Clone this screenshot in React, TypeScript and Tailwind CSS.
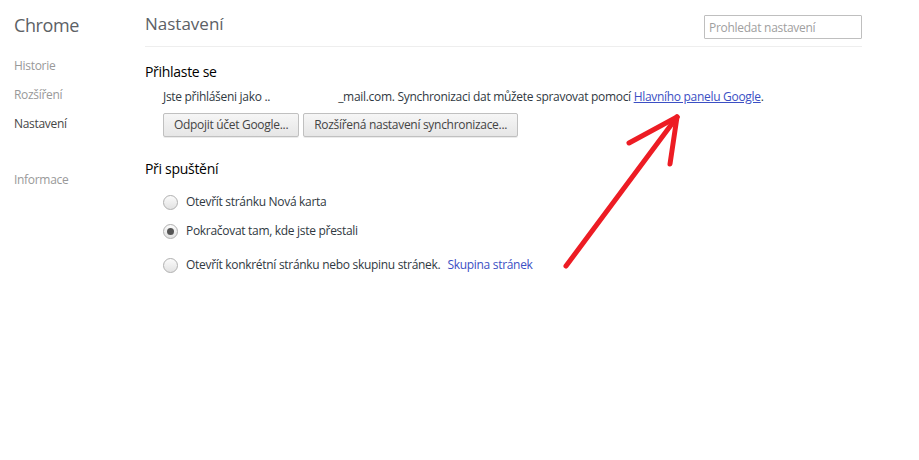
export default function App() {
  const font = { fontFamily: '"Open Sans", "Noto Sans", sans-serif' };
  return (
    <div className="relative h-[460px] w-[919px] bg-white text-[12px] tracking-[-0.3px] text-[#303942]" style={font}>
      <div className="flex">
        <aside className="w-[145px] shrink-0 pl-[14px] pt-[12px]">
          <div className="text-[18px] leading-[26px] tracking-[-0.4px] text-[#5c6166]">Chrome</div>
          <ul className="mt-[20px] space-y-[13px] leading-[16px]">
            <li className="text-[#999]">Historie</li>
            <li className="text-[#999]">Rozšíření</li>
            <li className="text-[#464646]">Nastavení</li>
          </ul>
          <div className="mt-[40px] leading-[16px] text-[#999]">Informace</div>
        </aside>

        <main className="w-[717px]">
          <header className="flex h-[47px] items-start justify-between border-b border-[#eeeeee] pt-[12px]">
            <h1 className="text-[17px] leading-[24px] tracking-normal text-[#5c6166]">Nastavení</h1>
            <input
              className="mt-[3px] h-[24px] w-[158px] rounded-[1px] border border-[#bfbfbf] px-[4px] text-[12px] tracking-[-0.28px] outline-none placeholder:text-[#a0a0a0]"
              placeholder="Prohledat nastavení"
              style={font}
            />
          </header>

          <section className="pt-[15px]">
            <h3 className="text-[14px] leading-[20px] text-[#000]">Přihlaste se</h3>
            <div className="mt-[7px] pl-[18px]">
              <p className="leading-[16px]">
                Jste přihlášeni jako ..
                <span className="inline-block w-[68px]" />
                _mail.com. Synchronizaci dat můžete spravovat pomocí{" "}
                <span className="text-[#3b4fc4] underline">Hlavního panelu Google</span>.
              </p>
              <div className="mt-[8px] flex gap-[4px]">
                <button className="h-[24px] rounded-[2px] border border-[#c0c0c0] bg-gradient-to-b from-[#f6f6f6] to-[#e6e6e6] px-[10px] text-[12px] text-[#444] shadow-[0_1px_0_rgba(0,0,0,0.08)]">
                  Odpojit účet Google...
                </button>
                <button className="h-[24px] rounded-[2px] border border-[#c0c0c0] bg-gradient-to-b from-[#f6f6f6] to-[#e6e6e6] px-[10px] text-[12px] text-[#444] shadow-[0_1px_0_rgba(0,0,0,0.08)]">
                  Rozšířená nastavení synchronizace...
                </button>
              </div>
            </div>
          </section>

          <section className="pt-[22px]">
            <h3 className="text-[14px] leading-[20px] text-[#000]">Při spuštění</h3>
            <div className="mt-[15px] flex flex-col pl-[18px]">
              <Radio label="Otevřít stránku Nová karta" />
              <div className="mt-[13px]">
                <Radio label="Pokračovat tam, kde jste přestali" checked />
              </div>
              <div className="mt-[18px]">
                <Radio
                  label="Otevřít konkrétní stránku nebo skupinu stránek."
                  link="Skupina stránek"
                />
              </div>
            </div>
          </section>
        </main>
      </div>

      <svg className="pointer-events-none absolute left-0 top-0" width="919" height="460">
        <g stroke="#ed1c24" strokeWidth="5" strokeLinecap="round" fill="none">
          <path d="M566 266 L677 117" />
          <path d="M629 143 L677 117" />
          <path d="M670 164 L677 117" />
        </g>
      </svg>
    </div>
  );
}

function Radio({ label, checked, link }: { label: string; checked?: boolean; link?: string }) {
  return (
    <div className="flex h-[16px] items-center">
      <span className="flex h-[15px] w-[15px] items-center justify-center rounded-full border border-[#b0b0b0] bg-gradient-to-b from-[#fbfbfb] to-[#e2e2e2]">
        {checked && <span className="h-[7px] w-[7px] rounded-full bg-[#555]" />}
      </span>
      <span className="ml-[8px] leading-[16px]">{label}</span>
      {link && <span className="ml-[7px] text-[#3b4fc4]">{link}</span>}
    </div>
  );
}
